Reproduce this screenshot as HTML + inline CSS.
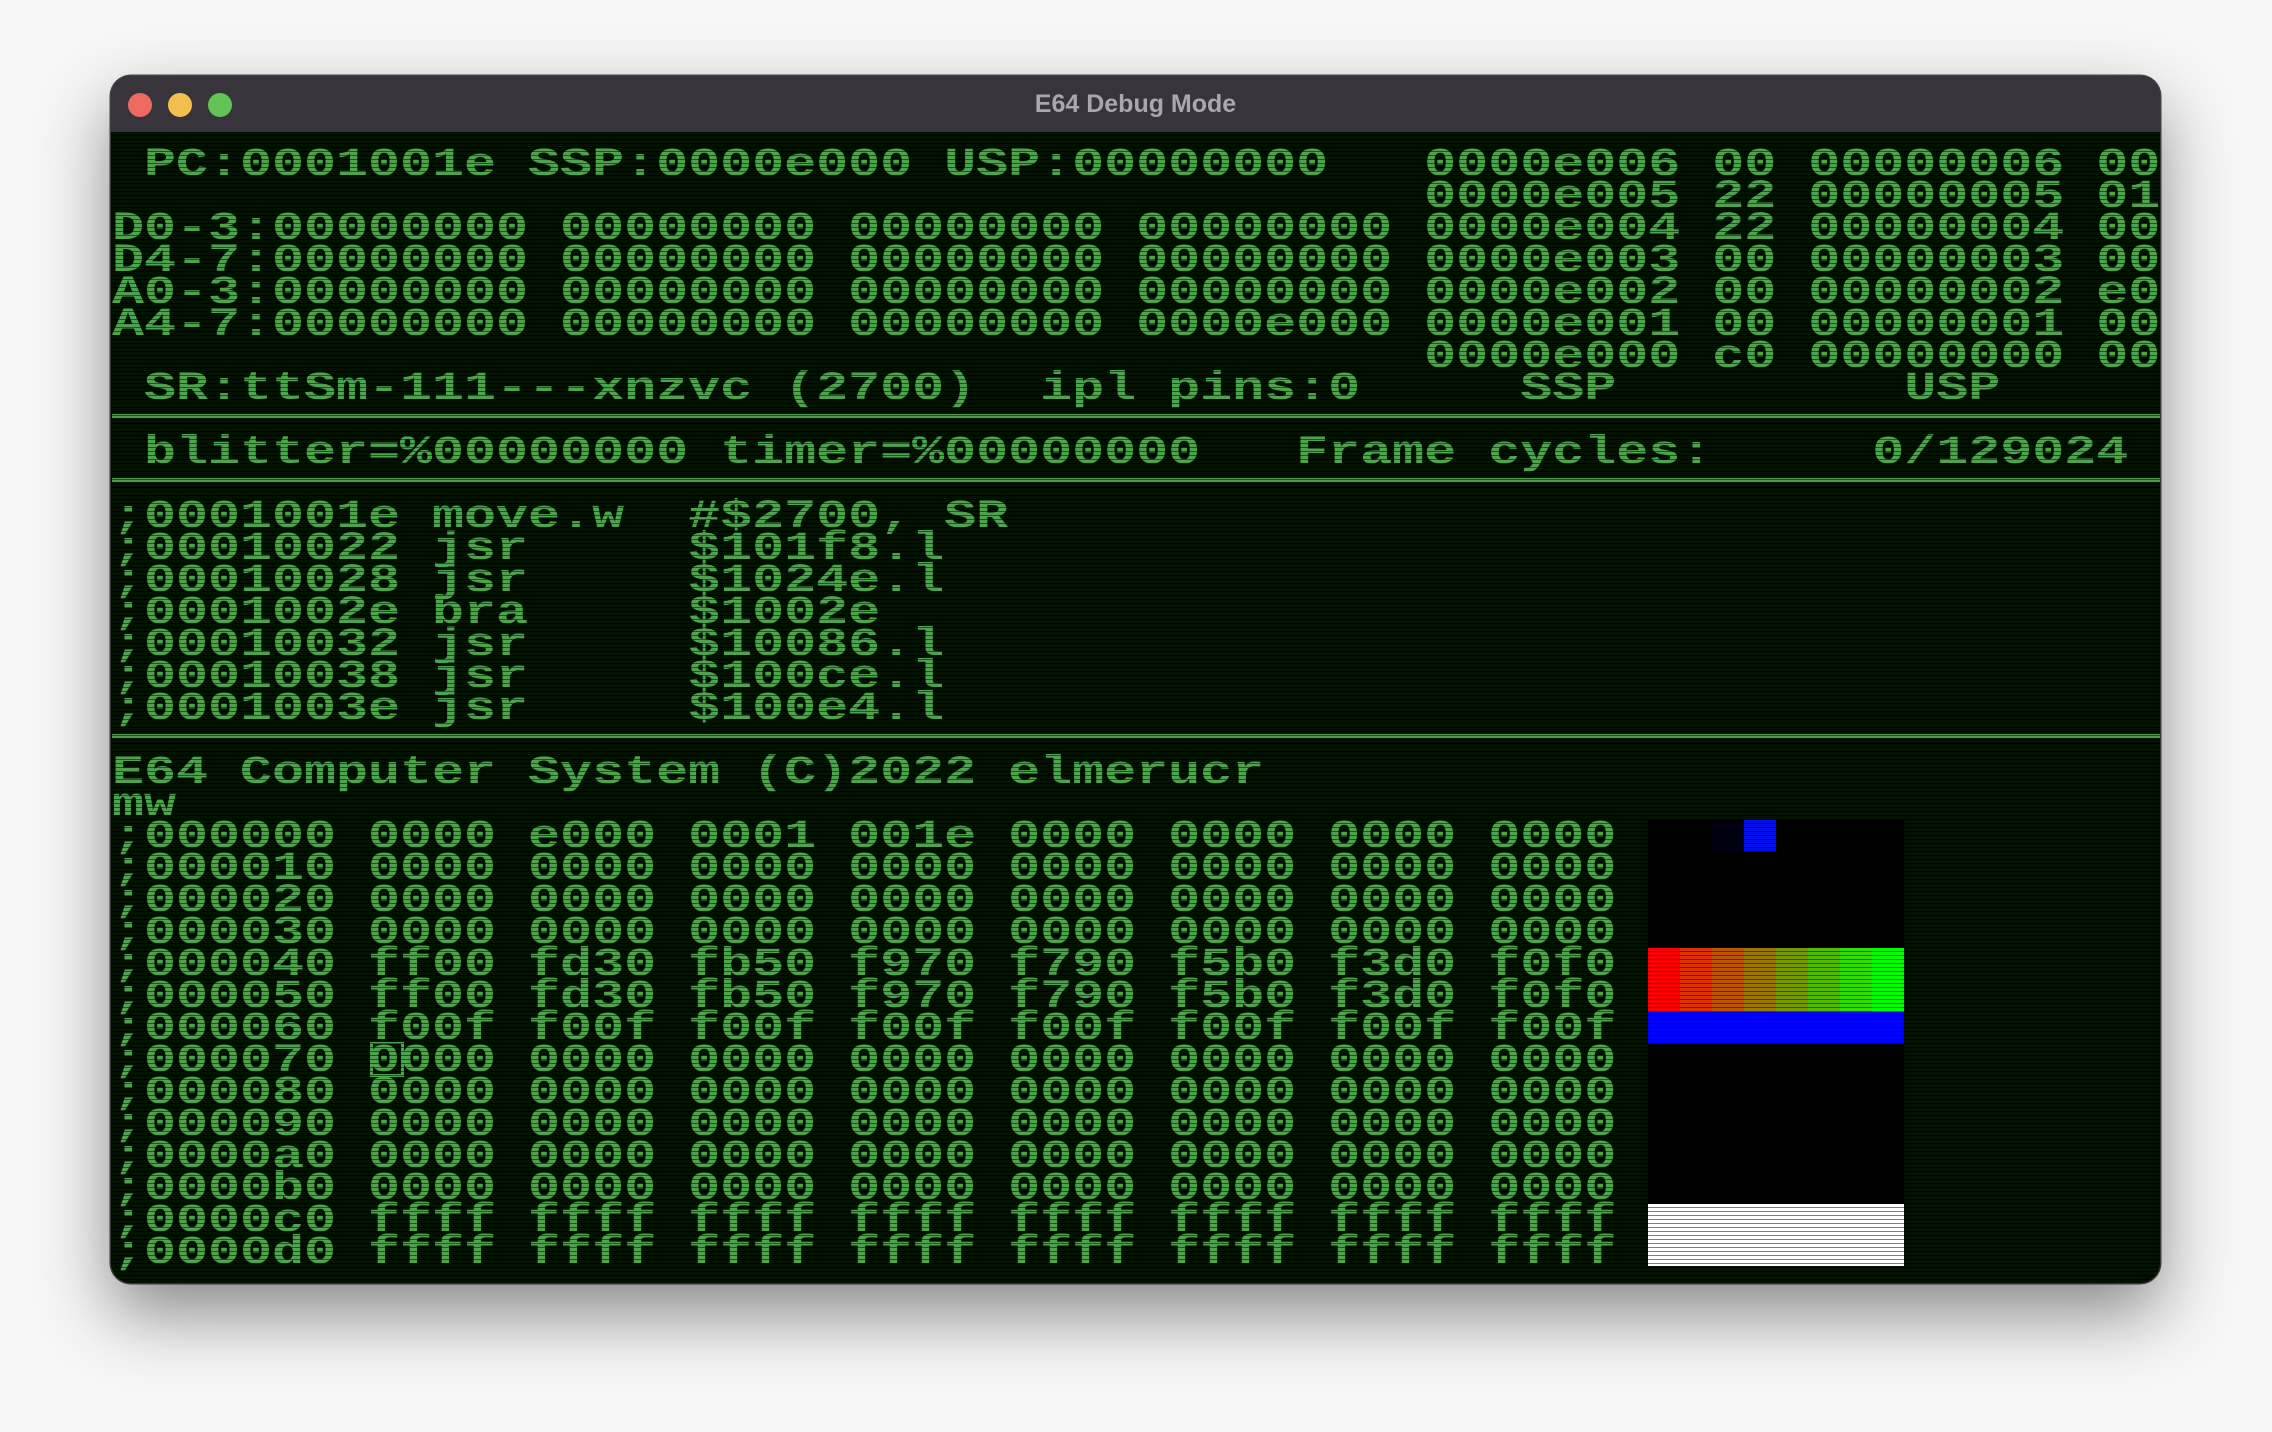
<!DOCTYPE html>
<html><head><meta charset="utf-8"><style>
html,body{margin:0;padding:0;}
body{width:2272px;height:1432px;background:#f6f6f6;position:relative;overflow:hidden;}
.win{position:absolute;left:111px;top:76px;width:2049px;height:1207px;border-radius:20px;background:#020c02;overflow:hidden;box-shadow:0 30px 70px rgba(0,0,0,0.45),0 0 0 1.5px #4a4a4a;}
.tb{position:absolute;left:0;top:0;width:100%;height:56px;background:#37343c;border-bottom:1px solid #111;}
.dot{position:absolute;top:17px;width:24px;height:24px;border-radius:50%;}
.title{position:absolute;left:0;width:100%;top:14px;text-align:center;font:bold 25px "Liberation Sans",sans-serif;color:#a9a7ad;}
.scr{position:absolute;left:1px;top:56px;width:2048px;height:1152px;background:repeating-linear-gradient(#031203 0 3px,#010801 3px 4px);}
.r{position:absolute;left:0;height:32px;line-height:32px;white-space:pre;font:bold 40px "Liberation Mono",monospace;color:#4fa34f;transform:scaleX(1.3333);transform-origin:0 0;}
.ln{position:absolute;left:0;width:2048px;height:4px;background:#4a9c4a;}
.img{position:absolute;left:1536px;top:688px;width:256px;height:446px;background:#000;}
.px{position:absolute;width:32px;height:32px;}
.scan{position:absolute;left:0;top:0;width:2048px;height:1152px;background:repeating-linear-gradient(transparent 0 3px,rgba(0,0,0,0.5) 3px 4px);}
.cur{position:absolute;left:258px;width:28px;height:30px;border:3px solid #4fa34f;border-top-width:2px;}
</style></head><body>
<div class="win">
<div class="tb">
<div class="dot" style="left:17px;background:#ee6a5f"></div>
<div class="dot" style="left:57px;background:#f5bf4f"></div>
<div class="dot" style="left:97px;background:#61c454"></div>
<div class="title">E64 Debug Mode</div>
</div>
<div class="scr">
<div class="r" style="top:11px"> PC:0001001e SSP:0000e000 USP:00000000   0000e006 00 00000006 00</div>
<div class="r" style="top:43px">                                         0000e005 22 00000005 01</div>
<div class="r" style="top:75px">D0-3:00000000 00000000 00000000 00000000 0000e004 22 00000004 00</div>
<div class="r" style="top:107px">D4-7:00000000 00000000 00000000 00000000 0000e003 00 00000003 00</div>
<div class="r" style="top:139px">A0-3:00000000 00000000 00000000 00000000 0000e002 00 00000002 e0</div>
<div class="r" style="top:171px">A4-7:00000000 00000000 00000000 0000e000 0000e001 00 00000001 00</div>
<div class="r" style="top:203px">                                         0000e000 c0 00000000 00</div>
<div class="r" style="top:235px"> SR:ttSm-111---xnzvc (2700)  ipl pins:0     SSP         USP</div>
<div class="ln" style="top:282px"></div>
<div class="r" style="top:299px"> blitter=%00000000 timer=%00000000   Frame cycles:     0/129024</div>
<div class="ln" style="top:346px"></div>
<div class="r" style="top:363px">;0001001e move.w  #$2700, SR</div>
<div class="r" style="top:395px">;00010022 jsr     $101f8.l</div>
<div class="r" style="top:427px">;00010028 jsr     $1024e.l</div>
<div class="r" style="top:459px">;0001002e bra     $1002e</div>
<div class="r" style="top:491px">;00010032 jsr     $10086.l</div>
<div class="r" style="top:523px">;00010038 jsr     $100ce.l</div>
<div class="r" style="top:555px">;0001003e jsr     $100e4.l</div>
<div class="ln" style="top:602px"></div>
<div class="r" style="top:619px">E64 Computer System (C)2022 elmerucr</div>
<div class="r" style="top:651px">mw</div>
<div class="r" style="top:683px">;000000 0000 e000 0001 001e 0000 0000 0000 0000</div>
<div class="r" style="top:715px">;000010 0000 0000 0000 0000 0000 0000 0000 0000</div>
<div class="r" style="top:747px">;000020 0000 0000 0000 0000 0000 0000 0000 0000</div>
<div class="r" style="top:779px">;000030 0000 0000 0000 0000 0000 0000 0000 0000</div>
<div class="r" style="top:811px">;000040 ff00 fd30 fb50 f970 f790 f5b0 f3d0 f0f0</div>
<div class="r" style="top:843px">;000050 ff00 fd30 fb50 f970 f790 f5b0 f3d0 f0f0</div>
<div class="r" style="top:875px">;000060 f00f f00f f00f f00f f00f f00f f00f f00f</div>
<div class="r" style="top:907px">;000070 0000 0000 0000 0000 0000 0000 0000 0000</div>
<div class="r" style="top:939px">;000080 0000 0000 0000 0000 0000 0000 0000 0000</div>
<div class="r" style="top:971px">;000090 0000 0000 0000 0000 0000 0000 0000 0000</div>
<div class="r" style="top:1003px">;0000a0 0000 0000 0000 0000 0000 0000 0000 0000</div>
<div class="r" style="top:1035px">;0000b0 0000 0000 0000 0000 0000 0000 0000 0000</div>
<div class="r" style="top:1067px">;0000c0 ffff ffff ffff ffff ffff ffff ffff ffff</div>
<div class="r" style="top:1099px">;0000d0 ffff ffff ffff ffff ffff ffff ffff ffff</div>
<div class="cur" style="top:910px"></div>
<div class="img">
<div class="px" style="left:64px;top:0;background:#000011"></div>
<div class="px" style="left:96px;top:0;background:#0011ee"></div>
<div style="position:absolute;left:0;top:128px;width:256px;height:64px;background:linear-gradient(90deg,#ff0000 0 32px,#dd3300 32px 64px,#bb5500 64px 96px,#997700 96px 128px,#779900 128px 160px,#55bb00 160px 192px,#33dd00 192px 224px,#00ff00 224px 256px)"></div>
<div style="position:absolute;left:0;top:192px;width:256px;height:32px;background:#0000ff"></div>
<div style="position:absolute;left:0;top:384px;width:256px;height:62px;background:#ffffff"></div>
</div>
<div class="scan"></div>
</div>
</div>
</body></html>
